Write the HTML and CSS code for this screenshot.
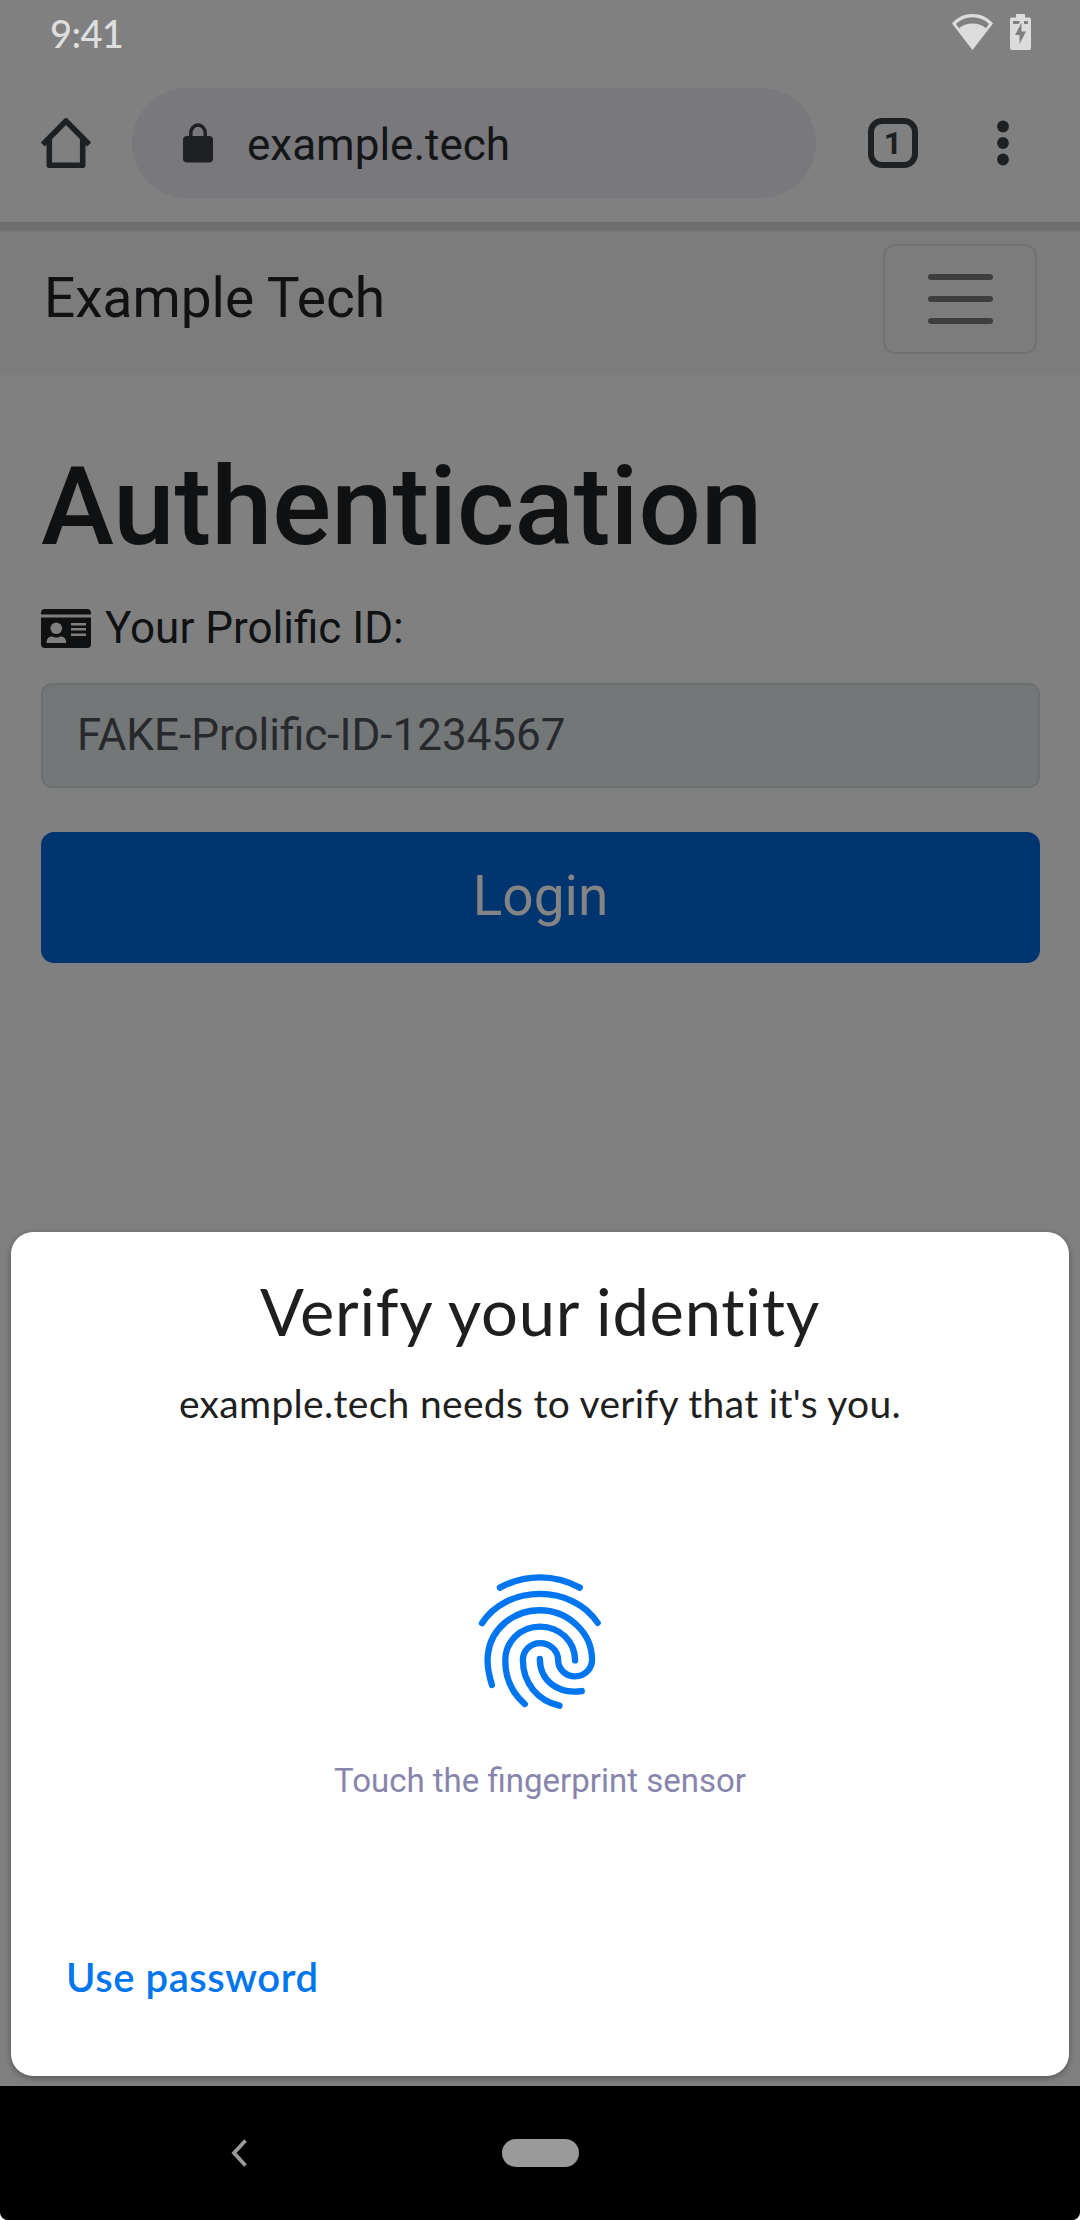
FILE: index.html
```html
<!DOCTYPE html>
<html lang="en">
<head>
<meta charset="utf-8">
<title>Authentication</title>
<link rel="stylesheet" href="styles.css">
</head>
<body>
<div class="phone">
  <header class="status">
    <span class="clock">9:41</span>
    <svg class="wifi" viewBox="0 0 41 36" width="41" height="36"><path fill="#dcdcdc" fill-rule="evenodd" d="M20.500 0C12.500 0 5.500 3 0 9.500L20.500 36L41 9.500C35.500 3 28.500 0 20.500 0ZM20.500 3.300C27 3.300 32.500 5.500 37 10L34 14.300C30.500 11 26 9.400 20.500 9.400S10.500 11 7 14.300L4 10C8.500 5.500 14 3.300 20.500 3.300Z"/></svg>
    <svg class="battery" viewBox="0 0 21 36" width="21" height="36"><path fill="#dcdcdc" d="M6 0H15V3.500H19Q21 3.500 21 5.500V34Q21 36 19 36H2Q0 36 0 34V5.500Q0 3.500 2 3.500H6Z"/><path fill="#808080" d="M3 7H10L8.700 10H3ZM14 7H18V10H14ZM11.500 8.500V17.500H16L9.500 30V21H5Z"/></svg>
  </header>
  <div class="toolbar">
    <svg class="home" viewBox="0 0 50 50" width="50" height="50" fill="none" stroke="#1e2123" stroke-width="5.600" stroke-linejoin="round"><path d="M1.800 26.500L25 3L48.200 26.500" stroke-linejoin="miter"/><path d="M8.300 21V47.200H41.700V21"/></svg>
    <div class="omnibox">
      <svg class="lock" viewBox="0 0 30 40" width="30" height="40"><rect y="13" width="30" height="26.500" rx="4" fill="#1f2021"/><path d="M7.800 15V10.500A7.200 8.500 0 0 1 22.200 10.500V15" fill="none" stroke="#1f2021" stroke-width="3.500"/></svg>
      <span class="url">example.tech</span>
    </div>
    <div class="tabs">1</div>
    <svg class="dots" viewBox="0 0 12 46" width="12" height="46" fill="#1e2123"><circle cx="6" cy="6.500" r="5.900"/><circle cx="6" cy="23" r="5.900"/><circle cx="6" cy="39.500" r="5.900"/></svg>
  </div>
  <nav class="navbar">
    <span class="brand">Example Tech</span>
    <div class="toggler"><i></i><i></i><i></i></div>
  </nav>
  <main class="content">
    <h1>Authentication</h1>
    <div class="label">
      <svg viewBox="0 0 50 39" width="50" height="39"><path fill="#0f1113" d="M4 0H46Q50 0 50 4V5.500H0V4Q0 0 4 0ZM0 8.500H50V35Q50 39 46 39H4Q0 39 0 35Z"/><g fill="#808080"><circle cx="15.300" cy="19.300" r="5.800"/><path d="M5.500 34C5.500 29.500 8 27.500 11 27.500Q15.300 29.500 19.500 27.500C23 27.500 25.200 29.500 25.200 34Z"/><path d="M30 14H45V16.500H30ZM30 19H45V21.500H30ZM30 24.500H45V27H30Z"/></g></svg>
      <span>Your Prolific ID:</span>
    </div>
    <div class="field">FAKE-Prolific-ID-1234567</div>
    <div class="login">Login</div>
  </main>
  <section class="sheet">
    <h2>Verify your identity</h2>
    <p class="reason">example.tech needs to verify that it's you.</p>
    <svg class="finger" viewBox="100 90 400 430" width="133" height="143" fill="none" stroke="#0075f0" stroke-width="19" stroke-linecap="round"><path d="M178 143Q235 112 298 112Q362 112 418 143"/><path d="M124 250C160 194 226 162 298 162C370 162 436 194 472 249"/><path d="M154 436C139 388 140 358 142 343C150 267 218 211 298 211C382 211 455 278 455 360C455 388 432 410 404 410C377 410 353 390 353 361C353 332 328 310 299 310C270 310 247 332 247 361C247 430 292 483 357 498"/><path d="M404 362C404 304 357 260 299 260C239 260 194 305 194 362C194 415 213 458 253 493"/><path d="M298 357C298 420 348 464 424 454"/></svg>
    <p class="hint">Touch the fingerprint sensor</p>
    <span class="password">Use password</span>
  </section>
  <footer class="sysnav">
    <svg class="back" viewBox="0 0 16 28" width="16" height="28"><path d="M14.500 1.500L3 14L14.500 26.500" fill="none" stroke="#9a9a9a" stroke-width="3.800"/></svg>
    <div class="pill"></div>
  </footer>
</div>
</body>
</html>
```
FILE: styles.css
```css
* { box-sizing: border-box; }
body { margin: 0; background: #fff; font-family: Roboto, "Liberation Sans", sans-serif; }
.phone { position: relative; display: flex; flex-direction: column; width: 1080px; height: 2220px; background: #808080; border-radius: 0 0 8px 8px; overflow: hidden; color: #0f1113; }
h1, h2, p { margin: 0; font-weight: 400; }
.status { display: flex; align-items: flex-start; height: 88px; padding: 14px 49px 0 50px; color: #dedede; }
.clock { flex: 1; font: 500 38px/38px Lato, sans-serif; letter-spacing: -0.6px; }
.battery { margin-left: 17px; }
.toolbar { display: flex; align-items: center; height: 134px; padding: 0 0 24px 41px; }
.omnibox { display: flex; align-items: center; width: 684px; height: 110px; margin-left: 41px; padding-left: 51px; border-radius: 55px; background: #79787c; }
.url { margin-left: 34px; padding-top: 4px; font-size: 44px; line-height: 52px; color: #131517; }
.tabs { width: 50px; height: 50px; margin-left: 52px; border: 6px solid #1e2123; border-radius: 14px; color: #1e2123; font-weight: 700; font-size: 32px; line-height: 39px; text-align: center; }
.dots { margin-left: 79px; }
.navbar { display: flex; align-items: center; justify-content: space-between; height: 153px; padding: 0 43px 0 44px; background: linear-gradient(#6c6c6c 0, #717171 8px, #797b7c 10px, #7c7c7d 13px); }
.brand { padding-bottom: 2px; font-size: 55px; line-height: 64px; }
.toggler { display: flex; flex-direction: column; align-items: center; justify-content: center; gap: 16px; width: 154px; height: 110px; border: 2px solid #727273; border-radius: 12px; }
.toggler i { width: 65px; height: 6px; border-radius: 3px; background: #3e3e3f; }
.content { padding: 66px 40px 0 41px; }
h1 { font-weight: 500; font-size: 110px; line-height: 132px; }
.label { display: flex; align-items: center; margin-top: 22px; gap: 14px; font-size: 44px; line-height: 66px; }
.field { height: 105px; margin-top: 22px; padding: 0 34px; border: 2px solid #6d7073; border-radius: 11px; background: #747778; color: #27292c; font-size: 44px; line-height: 101px; }
.login { height: 131px; margin-top: 44px; border-radius: 13px; background: #003570; color: #848484; font-size: 55px; line-height: 129px; text-align: center; }
.sheet { position: absolute; left: 11px; top: 1232px; display: flex; flex-direction: column; align-items: center; width: 1058px; height: 844px; padding-top: 39px; border-radius: 22px; background: #fff; box-shadow: 0 2px 6px rgba(0, 0, 0, .35); color: #1f1f1f; font-family: Lato, sans-serif; font-variant-ligatures: none; }
h2 { font-size: 65px; line-height: 80px; letter-spacing: 0.75px; }
.reason { margin-top: 27px; font-size: 39px; line-height: 50px; letter-spacing: 0.32px; }
.finger { margin-top: 142px; }
.hint { margin-top: 48px; font-family: Roboto, sans-serif; font-size: 33px; line-height: 40px; color: #8885ad; font-variant-ligatures: normal; }
.password { align-self: flex-start; margin: 151px 0 0 55px; font-weight: 600; font-size: 40px; line-height: 50px; letter-spacing: 0.55px; color: #0075f0; }
.sysnav { display: flex; align-items: center; height: 134px; margin-top: auto; padding-left: 231px; background: #000; }
.pill { width: 77px; height: 28px; margin-left: 255px; border-radius: 14px; background: #9a9a9a; }
```
